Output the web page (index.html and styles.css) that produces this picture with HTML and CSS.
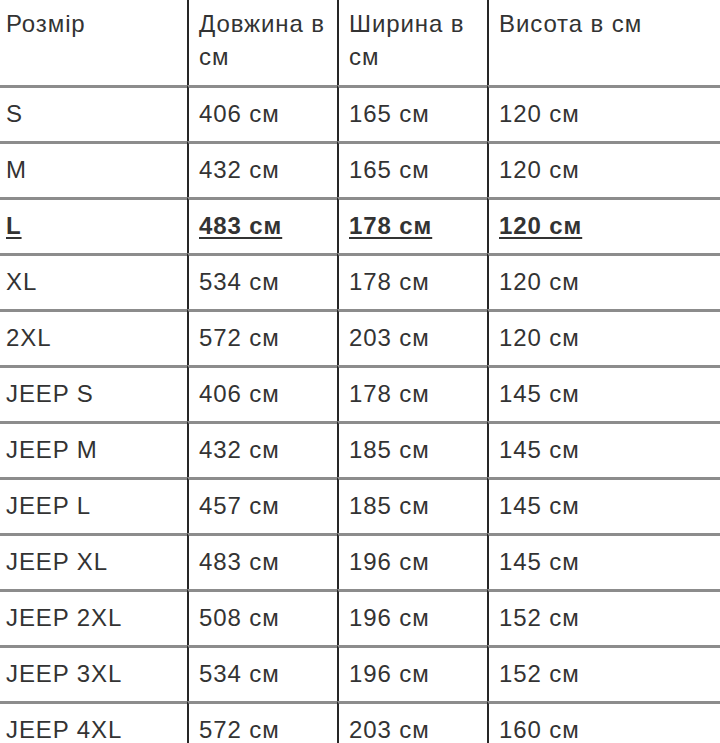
FILE: index.html
```html
<!DOCTYPE html>
<html lang="uk">
<head>
<meta charset="utf-8">
<title>Розмір</title>
<link rel="stylesheet" href="styles.css">
</head>
<body>
<div class="sizes">
  <div class="cell head first">Розмір</div>
  <div class="cell head">Довжина в см</div>
  <div class="cell head">Ширина в см</div>
  <div class="cell head">Висота в см</div>

  <div class="cell first">S</div><div class="cell">406 см</div><div class="cell">165 см</div><div class="cell">120 см</div>
  <div class="cell first">M</div><div class="cell">432 см</div><div class="cell">165 см</div><div class="cell">120 см</div>
  <div class="cell first"><span class="hl">L</span></div><div class="cell"><span class="hl">483 см</span></div><div class="cell"><span class="hl">178 см</span></div><div class="cell"><span class="hl">120 см</span></div>
  <div class="cell first">XL</div><div class="cell">534 см</div><div class="cell">178 см</div><div class="cell">120 см</div>
  <div class="cell first">2XL</div><div class="cell">572 см</div><div class="cell">203 см</div><div class="cell">120 см</div>
  <div class="cell first">JEEP S</div><div class="cell">406 см</div><div class="cell">178 см</div><div class="cell">145 см</div>
  <div class="cell first">JEEP M</div><div class="cell">432 см</div><div class="cell">185 см</div><div class="cell">145 см</div>
  <div class="cell first">JEEP L</div><div class="cell">457 см</div><div class="cell">185 см</div><div class="cell">145 см</div>
  <div class="cell first">JEEP XL</div><div class="cell">483 см</div><div class="cell">196 см</div><div class="cell">145 см</div>
  <div class="cell first">JEEP 2XL</div><div class="cell">508 см</div><div class="cell">196 см</div><div class="cell">152 см</div>
  <div class="cell first">JEEP 3XL</div><div class="cell">534 см</div><div class="cell">196 см</div><div class="cell">152 см</div>
  <div class="cell first">JEEP 4XL</div><div class="cell">572 см</div><div class="cell">203 см</div><div class="cell">160 см</div>
</div>
</body>
</html>
```
FILE: styles.css
```css
html, body {
  margin: 0;
  padding: 0;
  background: #ffffff;
}

body {
  font-family: "Liberation Sans", Arial, sans-serif;
  font-size: 24px;
  letter-spacing: 0.9px;
  line-height: 33px;
  color: #333333;
}

.sizes {
  display: grid;
  grid-template-columns: 187px 150px 150px 1fr;
  width: 720px;
}

.cell {
  border-top: 3px solid #8c8c8c;
  border-left: 2px solid #262626;
  padding: 9px 4px 11px 10px;
}

.cell.first {
  border-left: none;
  padding-left: 6px;
}

.cell.head {
  border-top: none;
  padding-top: 7px;
  padding-bottom: 12px;
}

.hl {
  font-weight: bold;
  text-decoration: underline;
  text-decoration-thickness: 2px;
  text-underline-offset: 3px;
}
```
